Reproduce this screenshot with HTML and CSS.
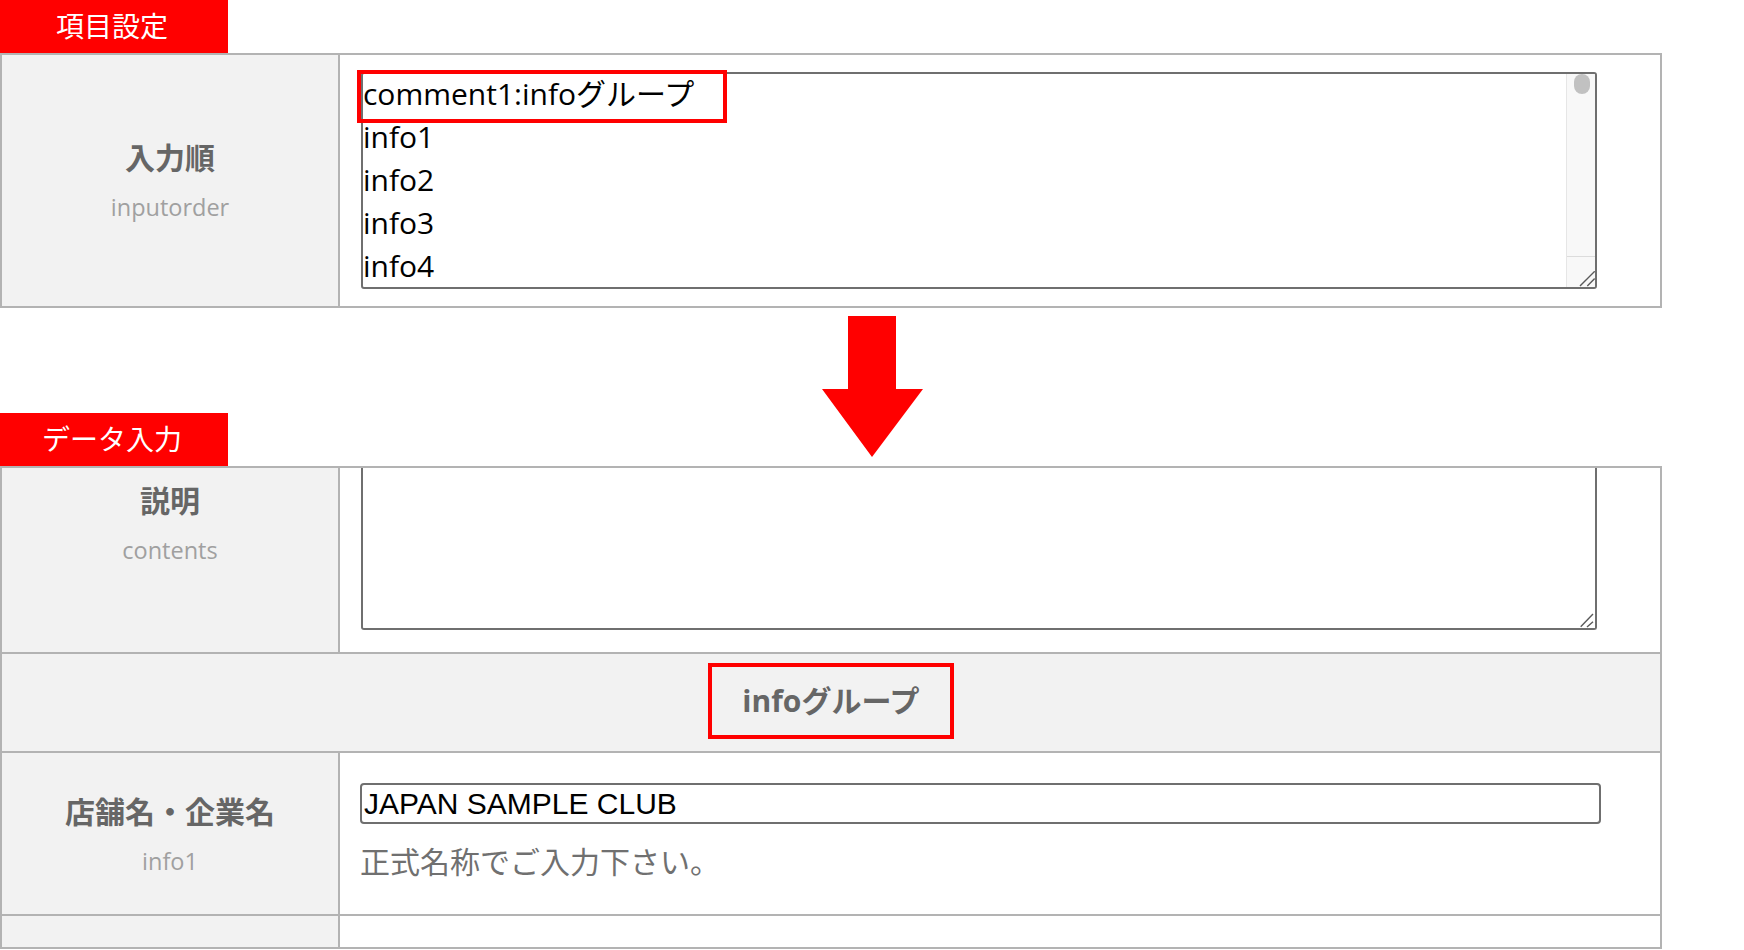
FILE: index.html
```html
<!DOCTYPE html>
<html lang="ja">
<head>
<meta charset="utf-8">
<title>項目設定</title>
<link rel="stylesheet" href="styles.css">
</head>
<body>
<div class="page">
  <div class="tab">項目設定</div>
  <div class="table">
    <div class="row row-order">
      <div class="label">
        <div class="label-title">入力順</div>
        <div class="label-sub">inputorder</div>
      </div>
      <div class="field field-order">
        <div class="textarea textarea-order">
          <div class="ta-content">
            <div class="ta-line">comment1:infoグループ</div>
            <div class="ta-line">info1</div>
            <div class="ta-line">info2</div>
            <div class="ta-line">info3</div>
            <div class="ta-line">info4</div>
          </div>
          <div class="ta-scroll">
            <div class="ta-thumb"></div>
            <div class="ta-resizer">
              <svg class="grip" width="16" height="16" viewBox="0 0 16 16"><path d="M1 15 L15.7 0.3 M8.3 15 L15.7 7.6" stroke="#5a5a5a" stroke-width="1.4" fill="none"/></svg>
            </div>
          </div>
        </div>
        <div class="highlight"></div>
      </div>
    </div>
  </div>

  <div class="gap">
    <svg class="arrow" width="101" height="141" viewBox="0 0 101 141"><polygon points="26,0 74,0 74,73 101,73 50,141 0,73 26,73" fill="#ff0000"/></svg>
  </div>

  <div class="tab">データ入力</div>
  <div class="table">
    <div class="row row-desc">
      <div class="label label-top">
        <div class="label-title">説明</div>
        <div class="label-sub">contents</div>
      </div>
      <div class="field field-desc">
        <div class="textarea textarea-desc">
          <svg class="grip grip-desc" width="16" height="16" viewBox="0 0 16 16"><path d="M1.7 14.7 L14 2 M8 15 L14 9.7" stroke="#5a5a5a" stroke-width="1.4" fill="none"/></svg>
        </div>
      </div>
    </div>
    <div class="group-row">
      <div class="group-title">infoグループ</div>
    </div>
    <div class="row row-name">
      <div class="label">
        <div class="label-title">店舗名・企業名</div>
        <div class="label-sub">info1</div>
      </div>
      <div class="field field-name">
        <div class="input">JAPAN SAMPLE CLUB</div>
        <div class="help">正式名称でご入力下さい。</div>
      </div>
    </div>
    <div class="row row-empty">
      <div class="label"></div>
      <div class="field"></div>
    </div>
  </div>
</div>
</body>
</html>
```

FILE: styles.css
```css
html, body {
  margin: 0;
  padding: 0;
  overflow: hidden;
  background: #ffffff;
}

body {
  width: 1744px;
  height: 950px;
  font-family: "Open Sans", "Noto Sans CJK JP", sans-serif;
  color: #000;
}

.page {
  width: 1662px;
}

.tab {
  width: 228px;
  height: 53px;
  background: #ff0000;
  color: #ffffff;
  font-family: "Noto Sans CJK JP", sans-serif;
  font-size: 28px;
  font-weight: 400;
  display: flex;
  align-items: center;
  justify-content: center;
  padding-right: 4px;
  padding-bottom: 4px;
  box-sizing: border-box;
}

.table {
  border: 2px solid #b3b3b3;
}

.row {
  display: grid;
  grid-template-columns: 338px 1fr;
}

.row + .row,
.group-row + .row,
.row + .group-row {
  border-top: 2px solid #b3b3b3;
}

.label {
  background: #f2f2f2;
  border-right: 2px solid #b3b3b3;
  display: flex;
  flex-direction: column;
  align-items: center;
  justify-content: center;
  text-align: center;
}

.label-top {
  justify-content: flex-start;
  padding-top: 11px;
}

.label-title {
  font-family: "Noto Sans CJK JP", sans-serif;
  font-size: 30px;
  font-weight: 700;
  line-height: 40px;
  color: #666666;
}

.label-sub {
  font-family: "Open Sans", "Noto Sans CJK JP", sans-serif;
  font-size: 23.5px;
  line-height: 31px;
  margin-top: 16px;
  color: #a0a0a0;
}

.row-order .label {
  padding-bottom: 3px;
}

.field {
  position: relative;
}

/* row 1 */
.row-order {
  height: 251px;
}

.field-order {
  padding: 17px 63px 17px 21px;
}

.textarea {
  border: 2px solid #6f6f6f;
  border-radius: 3px;
  box-sizing: border-box;
  background: #fff;
}

.textarea-order {
  height: 217px;
  display: flex;
  overflow: hidden;
}

.ta-content {
  flex: 1;
  padding-left: 0;
  font-family: "Open Sans", "Noto Sans CJK JP", sans-serif;
  font-size: 30px;
  line-height: 43px;
  color: #000;
  margin-top: -2px;
  overflow: hidden;
  white-space: nowrap;
}

.ta-scroll {
  width: 29px;
  box-sizing: border-box;
  border-left: 1px solid #e6e6e6;
  background: #f8f8f8;
  display: flex;
  flex-direction: column;
}

.ta-thumb {
  width: 16px;
  height: 20px;
  margin-left: 7px;
  margin-top: 0;
  border-radius: 8px;
  background: #c1c1c1;
}

.ta-resizer {
  margin-top: auto;
  height: 30px;
  border-top: 1px solid #dcdcdc;
  position: relative;
}

.grip {
  position: absolute;
  right: 0;
  bottom: 0;
  display: block;
}

.highlight {
  position: absolute;
  left: 17px;
  top: 15px;
  width: 370px;
  height: 53px;
  box-sizing: border-box;
  border: 4px solid #ff0000;
}

/* arrow gap */
.gap {
  height: 105px;
  position: relative;
}

.arrow {
  position: absolute;
  left: 822px;
  top: 8px;
  z-index: 2;
  display: block;
}

/* row 2 */
.row-desc {
  height: 184px;
}

.field-desc {
  padding: 0 63px 22px 21px;
}

.textarea-desc {
  height: 162px;
  border-top: none;
  border-radius: 0 0 3px 3px;
  position: relative;
}

/* group row */
.group-row {
  height: 99px;
  background: #f2f2f2;
  display: flex;
  justify-content: center;
  align-items: flex-start;
  padding-top: 9px;
  box-sizing: border-box;
}

.group-title {
  border: 4px solid #ff0000;
  padding: 14px 30px;
  font-family: "Open Sans", "Noto Sans CJK JP", sans-serif;
  font-size: 30px;
  font-weight: 700;
  line-height: 40px;
  color: #666666;
}

/* row 4 */
.row-name {
  height: 161px;
}

.field-name {
  padding: 30px 59px 0 20px;
}

.input {
  height: 41px;
  box-sizing: border-box;
  border: 2px solid #6f6f6f;
  border-radius: 4px;
  padding: 0 2px;
  font-family: "Liberation Sans", "Noto Sans CJK JP", sans-serif;
  font-size: 30px;
  line-height: 37px;
  color: #000;
  white-space: nowrap;
}

.help {
  margin-top: 16px;
  font-family: "Noto Sans CJK JP", sans-serif;
  font-size: 30px;
  line-height: 40px;
  color: #707070;
}

/* row 5 */
.row-empty {
  height: 31px;
}
```
